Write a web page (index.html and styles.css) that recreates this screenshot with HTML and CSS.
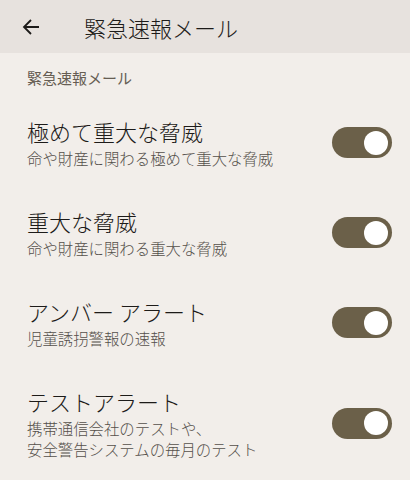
FILE: index.html
```html
<!DOCTYPE html>
<html lang="ja">
<head>
  <meta charset="UTF-8">
  <meta name="viewport" content="width=device-width, initial-scale=1.0">
  <title>緊急速報メール</title>
  <link rel="stylesheet" href="styles.css">
</head>
<body>
  <header class="topbar">
    <button class="back" aria-label="戻る">
      <svg width="24" height="24" viewBox="0 0 24 24">
        <path d="M20 12H5 M12 5l-7 7 7 7" fill="none" stroke="#1d1b19" stroke-width="1.8"/>
      </svg>
    </button>
    <h1 class="title">緊急速報メール</h1>
  </header>

  <div class="section-label">緊急速報メール</div>

  <div class="item">
    <div class="text">
      <div class="item-title">極めて重大な脅威</div>
      <div class="item-sub">命や財産に関わる極めて重大な脅威</div>
    </div>
    <div class="switch on"><span class="thumb"></span></div>
  </div>

  <div class="item">
    <div class="text">
      <div class="item-title">重大な脅威</div>
      <div class="item-sub">命や財産に関わる重大な脅威</div>
    </div>
    <div class="switch on"><span class="thumb"></span></div>
  </div>

  <div class="item">
    <div class="text">
      <div class="item-title">アンバー アラート</div>
      <div class="item-sub">児童誘拐警報の速報</div>
    </div>
    <div class="switch on"><span class="thumb"></span></div>
  </div>

  <div class="item">
    <div class="text">
      <div class="item-title">テストアラート</div>
      <div class="item-sub">携帯通信会社のテストや、<br>安全警告システムの毎月のテスト</div>
    </div>
    <div class="switch on"><span class="thumb"></span></div>
  </div>
</body>
</html>
```

FILE: styles.css
```css
body {
  margin: 0;
  background: #f2eeea;
  font-family: "Noto Sans CJK JP", "Noto Sans", sans-serif;
  font-weight: 300;
  color: #1d1b19;
}
.topbar {
  height: 53px;
  background: #e7e2de;
  display: flex;
  align-items: center;
}
.back {
  width: 24px;
  height: 24px;
  margin-left: 19px;
  padding: 0;
  border: none;
  background: none;
  display: flex;
  margin-top: 1px;
}
.title {
  margin: 0 0 0 41px;
  font-size: 22px;
  font-weight: 300;
  line-height: 30px;
  color: #1d1b19;
}
.section-label {
  padding: 14px 27px 9px;
  font-size: 15px;
  font-weight: 400;
  line-height: 21px;
  color: #665d53;
}
.item {
  display: flex;
  align-items: center;
  padding: 19px 18px 18px 27px;
}
.text {
  flex: 1;
}
.item-title {
  font-size: 22px;
  line-height: 30px;
  margin-bottom: 2px;
}
.item-sub {
  font-size: 15.4px;
  line-height: 21px;
  color: #55504b;
}
.switch {
  width: 60px;
  height: 31px;
  border-radius: 16px;
  background: #6b6049;
  display: flex;
  align-items: center;
  justify-content: flex-end;
  box-sizing: border-box;
  padding-right: 4px;
}
.thumb {
  width: 24px;
  height: 24px;
  border-radius: 50%;
  background: #ffffff;
}
```
